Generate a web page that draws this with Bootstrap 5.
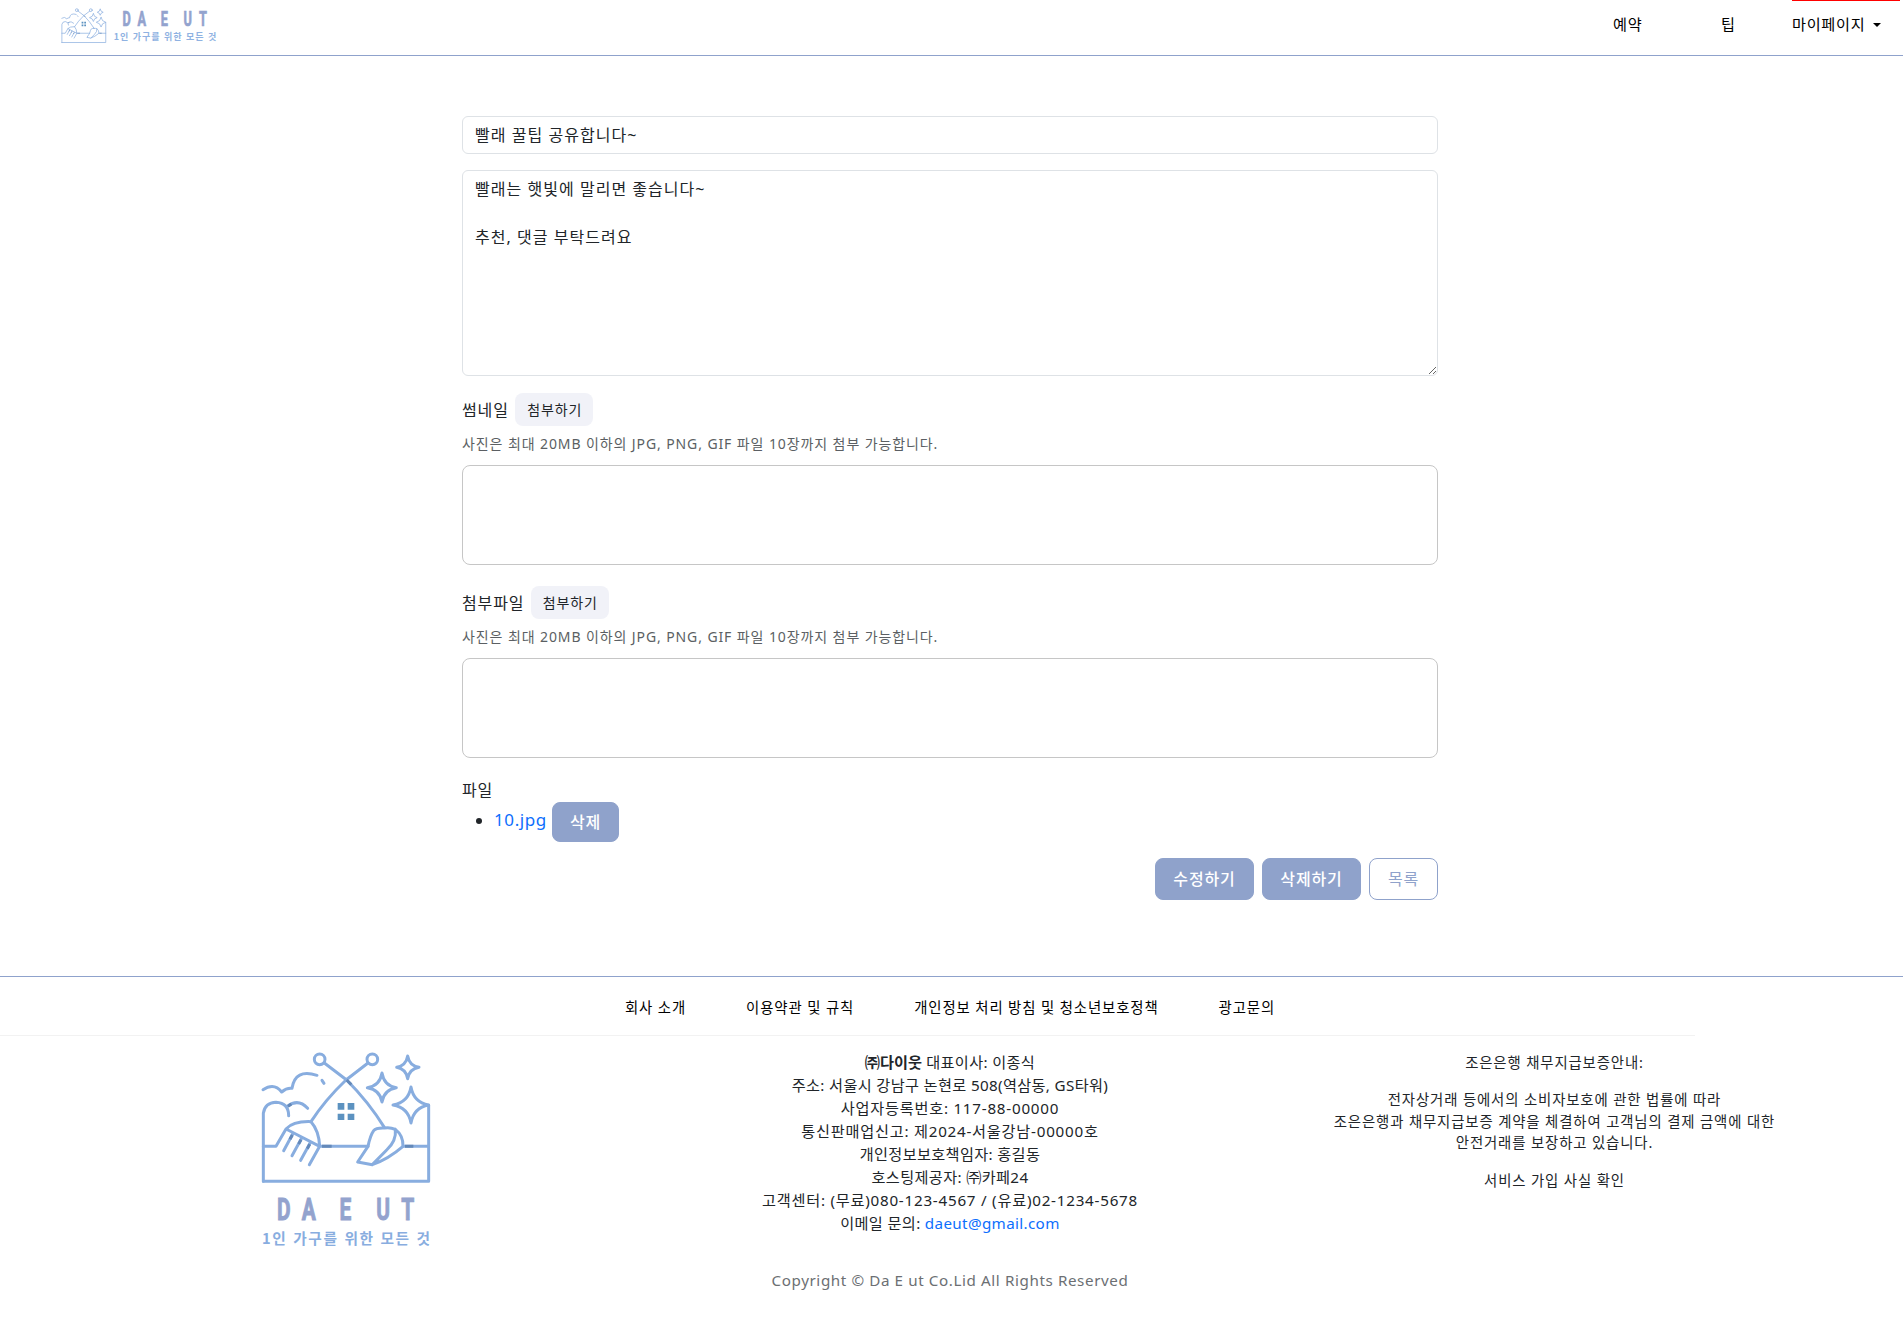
<!DOCTYPE html>
<html lang="ko">
<head>
<meta charset="utf-8">
<meta name="viewport" content="width=device-width, initial-scale=1">
<title>DA E UT</title>
<link href="https://cdn.jsdelivr.net/npm/bootstrap@5.3.0/dist/css/bootstrap.min.css" rel="stylesheet">
<style>
body{font-family:"Noto Sans","Noto Sans CJK KR",sans-serif;color:#212529;background:#fff}
.site-head{height:56px;border-bottom:1px solid #8fa2cc;padding-left:61px;padding-right:3px}
.brand-svg{width:160px;height:40px;margin-top:6px}
.menu-item{height:55px;color:#000;font-size:15.2px;line-height:23px;padding-top:12px;border-top:1px solid transparent;white-space:nowrap;text-decoration:none;letter-spacing:.7px}
.m1,.m3{width:108px}.m2{width:71px}
.m3{border-top-color:#f00}
.m3::after{margin-left:8px;vertical-align:3px;border-top-width:4.5px;border-left-width:4.5px;border-right-width:4.5px}
.page-wrap{padding-right:3px}
.edit-form{width:976px;padding-top:60px;letter-spacing:.9px}
.edit-form .btn{letter-spacing:.85px}
.edit-form .form-control{letter-spacing:1.03px}
.lab-row{height:33px;gap:6.3px}
.first-row{margin-top:17px}
.next-row{margin-top:21px}
.files{margin-top:20px}
.btn-attach{height:33px;width:78px;background:#f1f2f8;border-radius:8px;border:0;font-size:14px;padding:0 0 0 1px;color:#212529}
.hint{font-size:14px;line-height:21px;color:#5b5f63;margin-top:7px;margin-bottom:11px;letter-spacing:.9px}
.drop-box{height:100px;border:1px solid #c6c6c6;border-radius:8px}
.btn-main{background:#8fa2cb;color:#fff;border-radius:8px;border:1px solid #8fa2cb;font-weight:500;padding:0}
.btn-main.del{width:67px;height:40px}
.btn-main.big{width:99px;height:42px}
.btn-line{width:69px;height:42px;border:1px solid #8fa2cb;color:#8fa2cb;border-radius:8px;padding:0}
.file-link{font-size:17px;letter-spacing:.6px}
.site-foot{margin-top:76px;border-top:1px solid #8fa2cc}
.foot-nav{height:58px;font-size:14.4px;padding-top:4px;gap:60px;letter-spacing:.88px}
.foot-nav a{color:#000;text-decoration:none}
.foot-rule{width:1695px;height:1px;background:#f2f2f2}
.foot-cols{width:1812px;height:233px}
.foot-logo{width:173.33px;height:200px;margin-top:14px;margin-left:2px}
.co-lines{font-size:15.2px;line-height:22.95px;padding-top:15px;letter-spacing:.35px}
.co-num{letter-spacing:.76px}
.co-name{letter-spacing:0}
.bank-lines{font-size:14.4px;line-height:21.6px;padding-top:15.5px;padding-left:1px;letter-spacing:.87px}
.bank-lines p{margin-bottom:16px}
.copy-line{font-size:15.2px;color:#6c6f73;line-height:23px;letter-spacing:.6px}
</style>
</head>
<body>
<svg width="0" height="0" class="d-block position-absolute" aria-hidden="true">
<symbol id="house" viewBox="60 60 520 405">
<g fill="none" stroke="#88addf" stroke-linecap="round" stroke-linejoin="round">
<circle cx="239" cy="88" r="16"/><circle cx="397" cy="88" r="16"/>
<path d="M253 99 L320 150 Q385 215 433 292M384 99 L318 150 Q255 210 213 275"/>
<path d="M69 179Q103 157 125 186Q140 173 156 175Q165 115 231 136M246 151L252 160"/>
<path d="M70 454V250Q75 218 108 217Q146 219 146 257M142 229Q175 204 203 235"/>
<path d="M70 454H566V226M70 349H108L138 297Q160 273 213 275Q237 302 239 349L208 404M138 297L239 349M239 349H384M489 349H566"/>
<path d="M158 312L131 362M184 326L156 377M210 340L182 391"/>
<path d="M433 294Q408 293 401 302Q391 316 384 349L353 396L397 404Q445 387 489 349Q490 316 466 298Q450 291 433 294M466 298Q470 332 440 360L397 404"/>
<path d="M503 78Q508 107 537 112Q508 117 503 146Q498 117 470 112Q498 107 503 78ZM426 129Q432 167 469 173Q432 179 426 216Q420 179 382 173Q420 167 426 129ZM513 171Q521 217 566 225Q521 233 513 279Q505 233 459 225Q505 217 513 171Z"/>
<path stroke="#6489b9" stroke-linecap="butt" d="M320 150L334 164M246 349H275M495 349H520M157 315L150 328M183 329L176 342M209 343L202 356M144 229L154 222"/>
</g>
<path d="M293 219h20v20h-20zM323 219h20v20h-20zM293 251h20v19h-20zM323 251h20v19h-20z" fill="#5c92c0"/>
</symbol>
</svg>
<header class="site-head d-flex justify-content-between">
<a href="#"><svg class="brand-svg d-block" viewBox="180 18 480 120">
<svg x="180" y="23" width="138" height="107.5" viewBox="60 60 520 405" stroke-width="8"><use href="#house" x="60" y="60" width="520" height="405"/></svg>
<g transform="translate(-3 0) scale(.66 1)"><text y="78" font-family="Roboto" font-weight="700" font-size="58" fill="#93a3ce" stroke="#93a3ce" stroke-width="2" x="557 625 680 731 780 834 905">DA E UT</text></g>
<text x="338" y="121" font-family="Noto Sans CJK KR" font-weight="700" font-size="27" fill="#8fb2e2" textLength="308">1인 가구를 위한 모든 것</text>
</svg></a>
<nav class="d-flex">
<a href="#" class="menu-item m1">예약</a>
<a href="#" class="menu-item m2">팁</a>
<a href="#" class="menu-item m3 dropdown-toggle">마이페이지</a>
</nav>
</header>
<div class="page-wrap">
<main class="edit-form mx-auto">
<input class="form-control mb-3" value="빨래 꿀팁 공유합니다~">
<textarea class="form-control d-block" rows="8">빨래는 햇빛에 말리면 좋습니다~

추천, 댓글 부탁드려요</textarea>
<div class="lab-row first-row d-flex align-items-center"><span>썸네일</span><button class="btn btn-attach">첨부하기</button></div>
<p class="hint">사진은 최대 20MB 이하의 JPG, PNG, GIF 파일 10장까지 첨부 가능합니다.</p>
<div class="drop-box"></div>
<div class="lab-row next-row d-flex align-items-center"><span>첨부파일</span><button class="btn btn-attach">첨부하기</button></div>
<p class="hint">사진은 최대 20MB 이하의 JPG, PNG, GIF 파일 10장까지 첨부 가능합니다.</p>
<div class="drop-box"></div>
<div class="files">파일</div>
<ul class="mb-3"><li><a href="#" class="file-link text-decoration-none">10.jpg</a> <button class="btn btn-main del">삭제</button></li></ul>
<div class="d-flex justify-content-end gap-2"><button class="btn btn-main big">수정하기</button><button class="btn btn-main big">삭제하기</button><button class="btn btn-line">목록</button></div>
</main>
</div>
<footer class="site-foot">
<nav class="foot-nav page-wrap d-flex justify-content-center align-items-center"><a href="#">회사 소개</a><a href="#">이용약관 및 규칙</a><a href="#">개인정보 처리 방침 및 청소년보호정책</a><a href="#">광고문의</a></nav>
<div class="foot-rule"></div>
<div class="page-wrap">
<div class="foot-cols row g-0 mx-auto text-center">
<div class="col-4"><svg class="foot-logo" viewBox="60 60 520 600" stroke-width="9"><use href="#house" x="60" y="60" width="520" height="405"/>
<g transform="scale(.66 1)"><text y="570" font-family="Roboto" font-weight="700" font-size="95" fill="#93a3ce" stroke="#93a3ce" stroke-width="3" x="168 281 360 452 540 619 733">DA E UT</text></g>
<text x="66" y="643" font-family="Noto Sans CJK KR" font-weight="700" font-size="44" fill="#88addf" textLength="504">1인 가구를 위한 모든 것</text></svg></div>
<div class="col-4 co-lines">
<div><b class="co-name">㈜다이웃</b> 대표이사: 이종식</div>
<div>주소: 서울시 강남구 논현로 508(역삼동, GS타워)</div>
<div class="co-num">사업자등록번호: 117-88-00000</div>
<div class="co-num">통신판매업신고: 제2024-서울강남-00000호</div>
<div>개인정보보호책임자: 홍길동</div>
<div>호스팅제공자: ㈜카페24</div>
<div class="co-num">고객센터: (무료)080-123-4567 / (유료)02-1234-5678</div>
<div>이메일 문의: <a href="#" class="text-decoration-none">daeut@gmail.com</a></div>
</div>
<div class="col-4 bank-lines">
<p>조은은행 채무지급보증안내:</p>
<p>전자상거래 등에서의 소비자보호에 관한 법률에 따라<br>조은은행과 채무지급보증 계약을 체결하여 고객님의 결제 금액에 대한<br>안전거래를 보장하고 있습니다.</p>
<p>서비스 가입 사실 확인</p>
</div>
</div>
<div class="copy-line text-center">Copyright © Da E ut Co.Lid All Rights Reserved</div>
</div>
</footer>
<script src="https://cdn.jsdelivr.net/npm/bootstrap@5.3.0/dist/js/bootstrap.bundle.min.js"></script>
</body>
</html>
